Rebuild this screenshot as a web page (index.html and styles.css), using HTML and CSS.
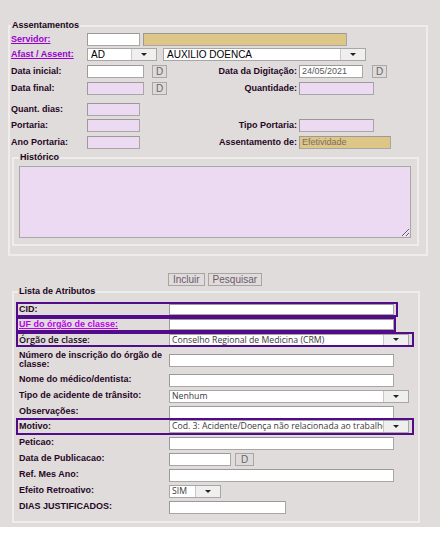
FILE: index.html
```html
<!DOCTYPE html>
<html lang="pt">
<head>
<meta charset="utf-8">
<title>Assentamentos</title>
<link rel="stylesheet" href="styles.css">
</head>
<body>
<div class="page">
  <fieldset class="fs fs-main">
    <legend>Assentamentos</legend>
    <div class="top-grid">
      <div class="row">
        <a class="lbl link" href="#">Servidor:</a>
        <span class="inp w53"></span>
        <span class="inp gold w204 ml3"></span>
      </div>
      <div class="row">
        <a class="lbl link" href="#">Afast / Assent:</a>
        <div class="sel w70"><span class="sel-text big">AD</span><span class="sel-btn"></span></div>
        <div class="sel w203 ml6"><span class="sel-text big">AUXILIO DOENCA</span><span class="sel-btn"></span></div>
      </div>
      <div class="row">
        <div class="left">
          <span class="lbl">Data inicial:</span>
          <span class="inp w57"></span>
          <span class="dbtn ml8">D</span>
        </div>
        <span class="rlbl">Data da Digitação:</span>
        <span class="inp w64 txt">24/05/2021</span>
        <span class="dbtn ml9">D</span>
      </div>
      <div class="row">
        <div class="left">
          <span class="lbl">Data final:</span>
          <span class="inp pink w57"></span>
          <span class="dbtn ml8">D</span>
        </div>
        <span class="rlbl">Quantidade:</span>
        <span class="inp pink w75"></span>
      </div>
      <div class="row">
        <div class="left">
          <span class="lbl">Quant. dias:</span>
          <span class="inp pink w53"></span>
        </div>
      </div>
      <div class="row">
        <div class="left">
          <span class="lbl">Portaria:</span>
          <span class="inp pink w53"></span>
        </div>
        <span class="rlbl">Tipo Portaria:</span>
        <span class="inp pink w75"></span>
      </div>
      <div class="row">
        <div class="left">
          <span class="lbl">Ano Portaria:</span>
          <span class="inp pink w53"></span>
        </div>
        <span class="rlbl">Assentamento de:</span>
        <span class="inp gold w92 txt">Efetividade</span>
      </div>
    </div>
    <fieldset class="fs fs-hist">
      <legend>Histórico</legend>
      <textarea class="hist"></textarea>
    </fieldset>
  </fieldset>

  <div class="actions">
    <button class="btn" type="button">Incluir</button>
    <button class="btn" type="button">Pesquisar</button>
  </div>

  <fieldset class="fs fs-attr">
    <legend>Lista de Atributos</legend>
    <div class="arow boxed first pr2">
      <span class="alabel">CID:</span>
      <span class="inp w225 h11"></span>
    </div>
    <div class="arow boxed">
      <a class="alabel link2" href="#">UF do órgão de classe:</a>
      <span class="inp w225 h11"></span>
    </div>
    <div class="arow boxed pr3">
      <span class="alabel sans">Órgão de classe:</span>
      <div class="sel w240 h12"><span class="sel-text os">Conselho Regional de Medicina (CRM)</span><span class="sel-btn"></span></div>
    </div>
    <div class="arow tall">
      <span class="alabel">Número de inscrição do órgão de classe:</span>
      <span class="inp w225 h13"></span>
    </div>
    <div class="arow">
      <span class="alabel">Nome do médico/dentista:</span>
      <span class="inp w225"></span>
    </div>
    <div class="arow">
      <span class="alabel">Tipo de acidente de trânsito:</span>
      <div class="sel w240"><span class="sel-text os">Nenhum</span><span class="sel-btn"></span></div>
    </div>
    <div class="arow">
      <span class="alabel">Observações:</span>
      <span class="inp w225"></span>
    </div>
    <div class="arow boxed motivo pr3">
      <span class="alabel">Motivo:</span>
      <div class="sel w240"><span class="sel-text os">Cod. 3: Acidente/Doença não relacionada ao trabalho</span><span class="sel-btn"></span></div>
    </div>
    <div class="arow after-box">
      <span class="alabel">Peticao:</span>
      <span class="inp w225"></span>
    </div>
    <div class="arow">
      <span class="alabel">Data de Publicacao:</span>
      <span class="inp w62"></span>
      <span class="dbtn w19 ml4">D</span>
    </div>
    <div class="arow">
      <span class="alabel">Ref. Mes Ano:</span>
      <span class="inp w225"></span>
    </div>
    <div class="arow">
      <span class="alabel">Efeito Retroativo:</span>
      <div class="sel w52"><span class="sel-text os">SIM</span><span class="sel-btn"></span></div>
    </div>
    <div class="arow">
      <span class="alabel">DIAS JUSTIFICADOS:</span>
      <span class="inp w117"></span>
    </div>
  </fieldset>
</div>
</body>
</html>
```

FILE: styles.css
```css
* { box-sizing: border-box; }
html, body { margin: 0; background: #ffffff; }
body {
  font-family: "Liberation Sans", Arial, sans-serif;
  font-size: 9px;
  line-height: 11px;
  color: #260626;
}
.page {
  background: #e0dcdb;
  padding: 20px 0 4px;
}

/* fieldsets */
.fs {
  margin: 0;
  border: 2px solid #efecec;
  min-width: 0;
}
.fs > legend {
  font-weight: bold;
  font-size: 9px;
  line-height: 11px;
  padding: 0 1px;
  color: #1a061a;
}
.fs-main {
  margin-left: 8px;
  width: 420px;
  padding: 1px 0 8px 1px;
}
.fs-hist {
  margin: 3px 0 0 1px;
  width: 407px;
  padding: 3px 6px 6px 5px;
}
.fs-attr {
  margin-left: 12px;
  width: 408px;
  padding: 7px 2px 8px 4px;
}

/* top block */
.top-grid {
  display: grid;
  grid-template-rows: 15px 17px 17px 21px 16px 17px 14px;
}
.row {
  display: flex;
  align-items: center;
  height: 14px;
}
.left {
  display: flex;
  align-items: center;
  width: 156px;
}
.lbl {
  width: 76px;
  flex: none;
  font-weight: bold;
  white-space: nowrap;
}
.rlbl {
  width: 132px;
  flex: none;
  padding-right: 2px;
  text-align: right;
  font-weight: bold;
  white-space: nowrap;
}
.link {
  color: #9a00cc;
  text-decoration: underline;
}

/* inputs */
.inp {
  display: block;
  flex: none;
  height: 13px;
  background: #ffffff;
  border: 1px solid #a9a6a6;
  border-top-color: #9c9999;
  border-left-color: #9c9999;
}
.inp.pink { background: #ecdaf2; }
.inp.gold { background: #ddc686; }
.inp.txt {
  padding-left: 2px;
  font-size: 9px;
  line-height: 11px;
  color: #5a5a5a;
}
.gold.txt { color: #7a7060; }

.dbtn {
  display: flex;
  align-items: center;
  justify-content: center;
  flex: none;
  width: 15px;
  height: 13px;
  background: #dedada;
  border: 1px solid #aaa7a7;
  font-size: 10px;
  color: #666666;
}

/* selects */
.sel {
  display: flex;
  flex: none;
  height: 13px;
  background: #ffffff;
  border: 1px solid #a9a6a6;
  overflow: hidden;
}
.sel-text {
  flex: 1;
  min-width: 0;
  overflow: hidden;
  white-space: nowrap;
  padding-left: 2px;
  color: #333;
}
.sel-text.big {
  font-size: 10px;
  line-height: 11px;
  padding-left: 3px;
  color: #000;
}
.sel-text.os {
  font-family: "Open Sans", "Noto Sans", sans-serif;
  font-size: 8.7px;
  line-height: 10px;
  color: #3a3a3a;
}
.sel-btn {
  flex: none;
  width: 25px;
  display: flex;
  align-items: center;
  justify-content: center;
  background: #efefef;
  border-left: 1px solid #c9c7c7;
}
.sel-btn::after {
  content: "";
  border-left: 3px solid transparent;
  border-right: 3px solid transparent;
  border-top: 3px solid #222;
}

textarea.hist {
  display: block;
  width: 392px;
  height: 72px;
  margin: 0;
  padding: 0;
  background: #ecdaf2;
  border: 1px solid #a9a6a6;
  resize: both;
}

/* actions */
.actions {
  display: flex;
  justify-content: center;
  gap: 3px;
  margin-top: 17px;
  padding-right: 10px;
}
.btn {
  height: 13px;
  margin: 0;
  padding: 0 4px;
  font-family: "Liberation Sans", Arial, sans-serif;
  font-size: 10px;
  line-height: 11px;
  color: #6b5a6b;
  background: #e0dcdb;
  border: 1px solid #a9a5a5;
}

/* attribute rows */
.arow {
  display: flex;
  align-items: center;
  width: fit-content;
  height: 12px;
  margin-top: 4px;
}
.arow.first { margin-top: 0; }
.arow.tall { height: 20px; margin-top: 5px; }
.arow.boxed {
  height: 11px;
  outline: 2px solid #520c8a;
}
.arow.motivo { height: 13px; margin-top: 2px; }
.arow.after-box { margin-top: 4px; }
.pr2 { padding-right: 2px; }
.pr3 { padding-right: 3px; }
.alabel {
  width: 151px;
  flex: none;
  padding-left: 1px;
  font-weight: bold;
  line-height: 9.5px;
}
.alabel.sans {
  font-family: "Open Sans", "Noto Sans", sans-serif;
  font-weight: 600;
  font-size: 9px;
  color: #1a061a;
}
.link2 {
  color: #bb00ee;
  text-decoration: underline;
}

/* sizes */
.w52 { width: 52px; }
.w53 { width: 53px; }
.w57 { width: 57px; }
.w62 { width: 62px; }
.w64 { width: 64px; }
.w70 { width: 70px; }
.w75 { width: 75px; }
.w92 { width: 92px; }
.w117 { width: 117px; }
.w19 { width: 19px; }
.w203 { width: 203px; }
.w204 { width: 204px; }
.w225 { width: 225px; }
.w240 { width: 240px; }
.h11 { height: 11px; }
.h12 { height: 12px; }
.h13 { height: 13px; }
.ml3 { margin-left: 3px; }
.ml4 { margin-left: 4px; }
.ml6 { margin-left: 6px; }
.ml8 { margin-left: 8px; }
.ml9 { margin-left: 9px; }
```
